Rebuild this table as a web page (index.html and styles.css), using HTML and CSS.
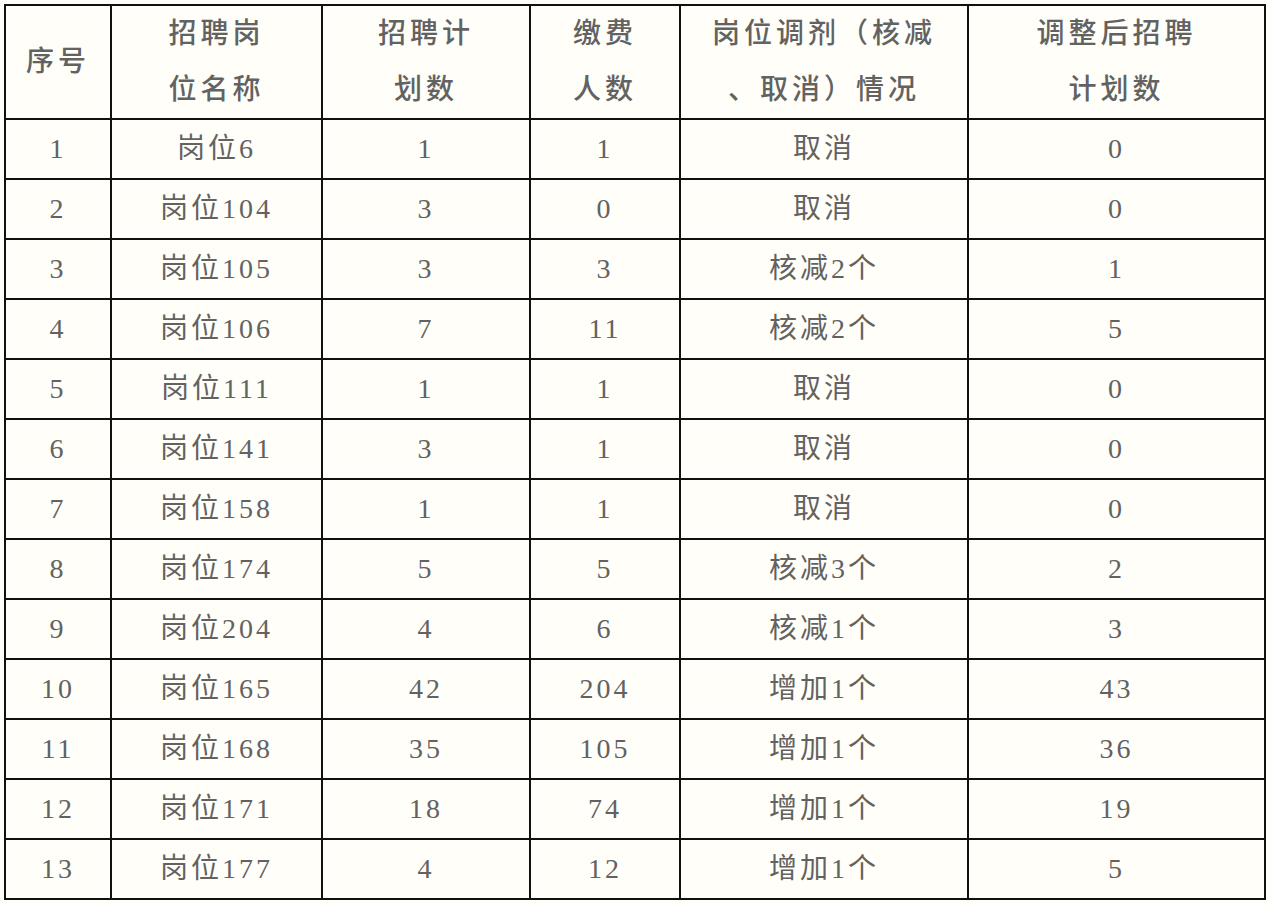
FILE: index.html
```html
<!DOCTYPE html>
<html lang="zh-CN">
<head>
<meta charset="utf-8">
<title>岗位调剂情况</title>
<link rel="stylesheet" href="styles.css">
</head>
<body>
<table class="plan">
  <colgroup>
    <col class="c1"><col class="c2"><col class="c3"><col class="c4"><col class="c5"><col class="c6">
  </colgroup>
  <thead>
    <tr class="head">
      <th>序号</th>
      <th>招聘岗<br>位名称</th>
      <th>招聘计<br>划数</th>
      <th>缴费<br>人数</th>
      <th>岗位调剂（核减<br>、取消）情况</th>
      <th>调整后招聘<br>计划数</th>
    </tr>
  </thead>
  <tbody>
    <tr><td>1</td><td>岗位6</td><td>1</td><td>1</td><td>取消</td><td>0</td></tr>
    <tr><td>2</td><td>岗位104</td><td>3</td><td>0</td><td>取消</td><td>0</td></tr>
    <tr><td>3</td><td>岗位105</td><td>3</td><td>3</td><td>核减2个</td><td>1</td></tr>
    <tr><td>4</td><td>岗位106</td><td>7</td><td>11</td><td>核减2个</td><td>5</td></tr>
    <tr><td>5</td><td>岗位111</td><td>1</td><td>1</td><td>取消</td><td>0</td></tr>
    <tr><td>6</td><td>岗位141</td><td>3</td><td>1</td><td>取消</td><td>0</td></tr>
    <tr><td>7</td><td>岗位158</td><td>1</td><td>1</td><td>取消</td><td>0</td></tr>
    <tr><td>8</td><td>岗位174</td><td>5</td><td>5</td><td>核减3个</td><td>2</td></tr>
    <tr><td>9</td><td>岗位204</td><td>4</td><td>6</td><td>核减1个</td><td>3</td></tr>
    <tr><td>10</td><td>岗位165</td><td>42</td><td>204</td><td>增加1个</td><td>43</td></tr>
    <tr><td>11</td><td>岗位168</td><td>35</td><td>105</td><td>增加1个</td><td>36</td></tr>
    <tr><td>12</td><td>岗位171</td><td>18</td><td>74</td><td>增加1个</td><td>19</td></tr>
    <tr><td>13</td><td>岗位177</td><td>4</td><td>12</td><td>增加1个</td><td>5</td></tr>
  </tbody>
</table>
</body>
</html>
```

FILE: styles.css
```css
html, body {
  margin: 0;
  padding: 0;
  background: #fffef8;
}
body {
  padding: 4px;
  font-family: "Liberation Serif", "Noto Sans CJK SC", serif;
  color: #626262;
}
.plan {
  border-collapse: collapse;
  table-layout: fixed;
  width: 1262px;
  font-size: 28px;
}
.c1 { width: 106px; }
.c2 { width: 211px; }
.c3 { width: 208px; }
.c4 { width: 150px; }
.c5 { width: 288px; }
.c6 { width: 297px; }
.plan th, .plan td {
  border: 2px solid #111111;
  padding: 0;
  text-align: center;
  vertical-align: middle;
  font-weight: normal;
}
.plan th {
  line-height: 56px;
  letter-spacing: 4px;
  font-weight: 500;
}
.plan td {
  line-height: 30px;
  letter-spacing: 3px;
}
.head { height: 113px; }
.plan tbody tr { height: 60px; }
```
